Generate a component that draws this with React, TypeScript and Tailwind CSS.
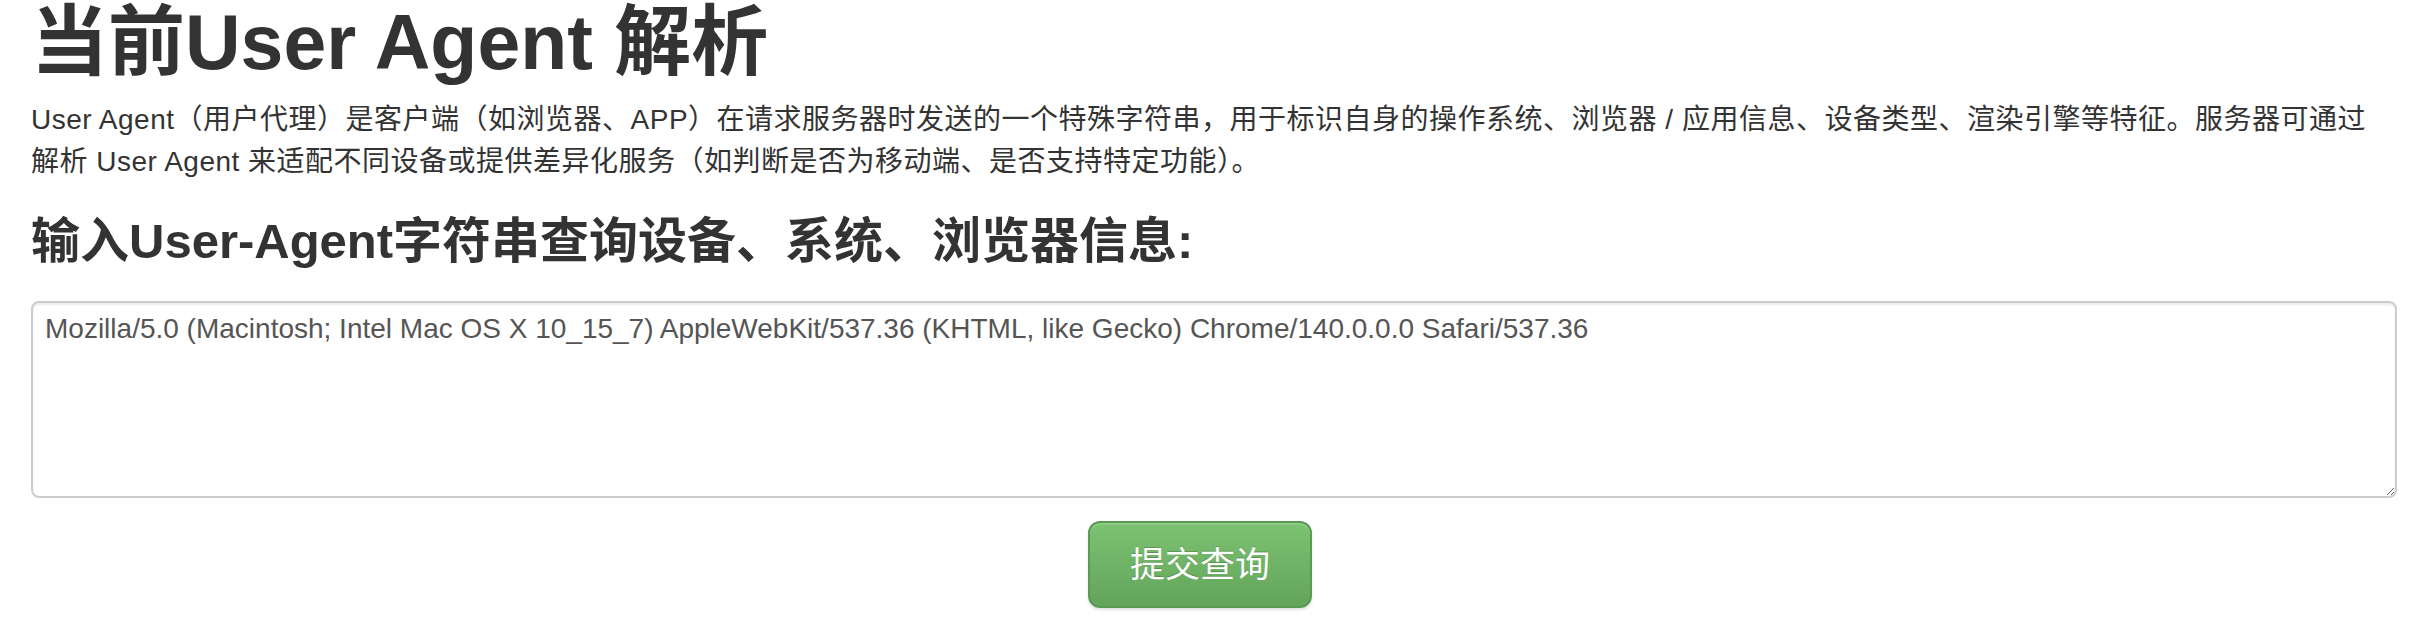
const UA =
  "Mozilla/5.0 (Macintosh; Intel Mac OS X 10_15_7) AppleWebKit/537.36 (KHTML, like Gecko) Chrome/140.0.0.0 Safari/537.36";

const App = () => {
  return (
    <div className="w-[2422px] h-[632px] bg-white text-[#333] font-['Liberation_Sans','Noto_Sans_CJK_SC',sans-serif] overflow-hidden">
      <div className="pl-[31px] pr-[25px]">
        <h1 className="text-[77px] leading-[84px] font-bold m-0">当前User Agent 解析</h1>
        <p className="mt-[15px] text-[28px] leading-[42px] tracking-[0.5px]">
          User Agent（用户代理）是客户端（如浏览器、APP）在请求服务器时发送的一个特殊字符串，用于标识自身的操作系统、浏览器 / 应用信息、设备类型、渲染引擎等特征。服务器可通过
          <br />
          解析 User Agent 来适配不同设备或提供差异化服务（如判断是否为移动端、是否支持特定功能）。
        </p>
        <h3 className="mt-[31px] text-[49px] leading-[54px] font-bold">输入User-Agent字符串查询设备、系统、浏览器信息:</h3>
        <textarea
          className="mt-[33px] block w-full h-[197px] border-2 border-[#ccc] rounded-[8px] px-[12px] py-[6px] text-[28px] leading-[40px] text-[#555] shadow-[inset_0_2px_2px_rgba(0,0,0,0.075)] outline-none"
          defaultValue={UA}
        />
      </div>
      <div className="w-[2400px] flex justify-center mt-[23px]">
        <button className="h-[87px] px-[40px] rounded-[12px] border-2 border-[#5b9a53] bg-gradient-to-b from-[#7dc172] to-[#62a55b] text-white text-[35px] leading-[40px] shadow-[inset_0_2px_0_rgba(255,255,255,0.15),0_2px_3px_rgba(0,0,0,0.12)] [text-shadow:0_-1px_0_rgba(0,0,0,0.2)]">
          提交查询
        </button>
      </div>
    </div>
  );
};

export default App;
